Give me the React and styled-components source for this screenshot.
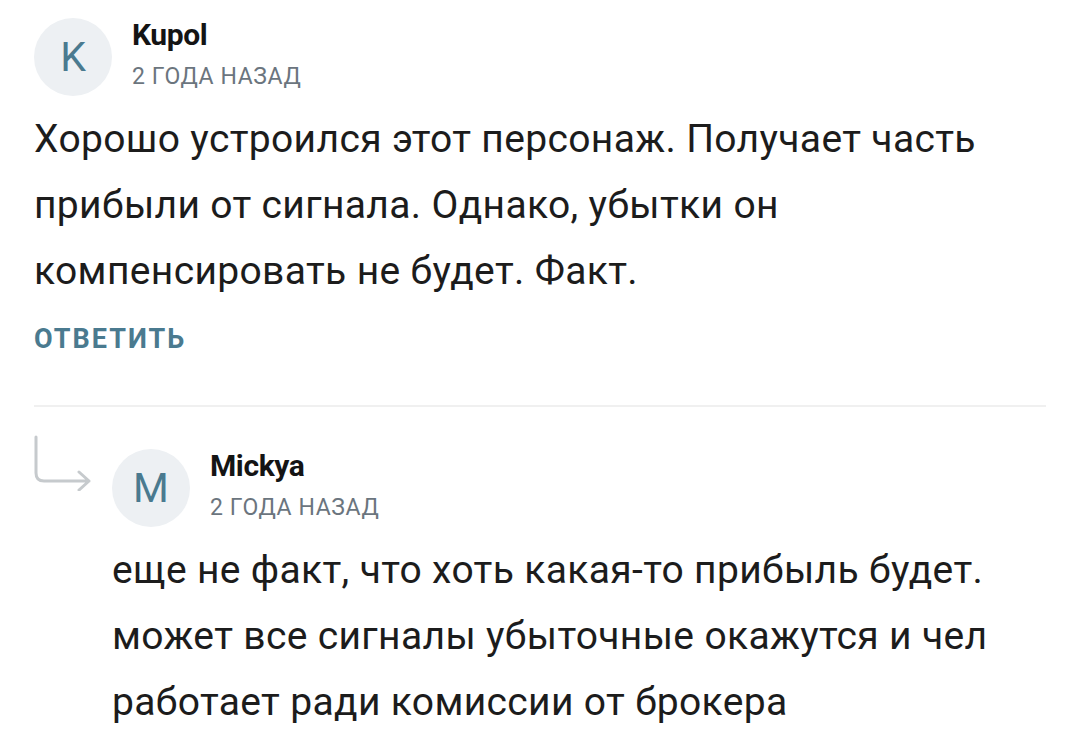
import React from 'react';
import styled, { createGlobalStyle } from 'styled-components';

const Global = createGlobalStyle`
  body {
    margin: 0;
    background: #ffffff;
    font-family: Roboto, "Noto Sans", sans-serif;
    color: #1c1c1c;
  }
`

const Page = styled.div`
  padding: 18px 34px 0 34px;
  width: 1012px;
`

const Comment = styled.div`
  display: flex;
  flex-direction: column;
  margin-top: ${p => p.offset || 0}px;
`

const Head = styled.div`
  display: flex;
  align-items: flex-start;
  gap: 20px;
`

const Avatar = styled.div`
  width: 78px;
  height: 78px;
  border-radius: 50%;
  background: #edf0f3;
  color: #4a7a8f;
  font-size: 41px;
  display: flex;
  align-items: center;
  justify-content: center;
  flex-shrink: 0;
`

const Meta = styled.div`
  display: flex;
  flex-direction: column;
  padding-top: 1px;
`

const Name = styled.div`
  font-size: 30px;
  font-weight: 700;
  color: #141414;
  letter-spacing: -0.4px;
  line-height: 32px;
`

const Date = styled.div`
  font-size: 23px;
  color: #6b757e;
  letter-spacing: 0.6px;
  line-height: 28px;
  margin-top: 12px;
`

const Text = styled.div`
  font-size: 39px;
  line-height: 66px;
  letter-spacing: 0.35px;
  margin-top: 10px;
  color: #1c1c1c;
`

const ReplyLink = styled.div`
  font-size: 27px;
  font-weight: 700;
  color: #4a7a8f;
  letter-spacing: 2px;
  margin-top: 19px;
`

const Divider = styled.div`
  height: 2px;
  background: #f0f0f0;
  margin-top: 50px;
`

const ReplyRow = styled.div`
  display: flex;
  align-items: flex-start;
  padding-top: 28px;
`

const ArrowBox = styled.div`
  width: 78px;
  flex-shrink: 0;
`

const ReplyArrow = () => (
  <svg width="60" height="56" viewBox="0 0 60 56">
    <path
      d="M2 2 V38 Q2 46 10 46 H55 M45 37 L55 46 L45 55"
      fill="none"
      stroke="#c6cacd"
      strokeWidth="3"
      strokeLinecap="round"
      strokeLinejoin="round"
    />
  </svg>
)

export default function App() {
  return (
    <Page>
      <Global />
      <Comment>
        <Head>
          <Avatar>K</Avatar>
          <Meta>
            <Name>Kupol</Name>
            <Date>2 ГОДА НАЗАД</Date>
          </Meta>
        </Head>
        <Text>
          Хорошо устроился этот персонаж. Получает часть прибыли от сигнала. Однако, убытки он компенсировать не будет. Факт.
        </Text>
        <ReplyLink>ОТВЕТИТЬ</ReplyLink>
      </Comment>
      <Divider />
      <ReplyRow>
        <ArrowBox>
          <ReplyArrow />
        </ArrowBox>
        <Comment offset={14}>
          <Head>
            <Avatar>M</Avatar>
            <Meta>
              <Name>Mickya</Name>
              <Date>2 ГОДА НАЗАД</Date>
            </Meta>
          </Head>
          <Text>
            еще не факт, что хоть какая-то прибыль будет. может все сигналы убыточные окажутся и чел работает ради комиссии от брокера
          </Text>
        </Comment>
      </ReplyRow>
    </Page>
  );
}
